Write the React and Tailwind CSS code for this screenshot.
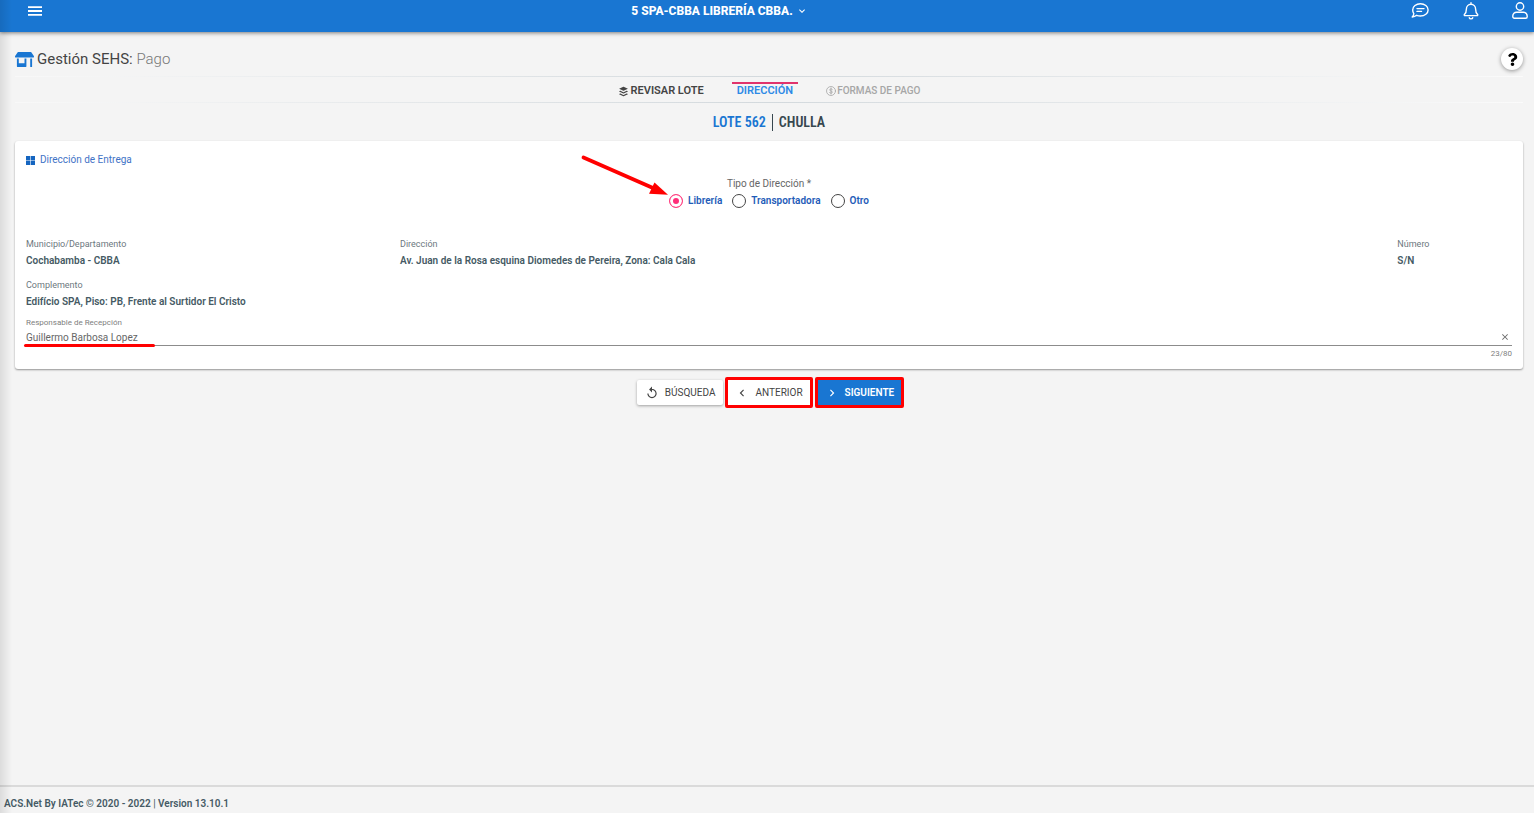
import React, { useState } from 'react';
import { FaStoreAlt, FaQuestion, FaBuffer } from 'react-icons/fa';
import { MdReplay, MdChevronLeft, MdChevronRight, MdClose, MdKeyboardArrowDown } from 'react-icons/md';

function HeaderBar() {
  return (
    <header className="relative flex h-8 items-center bg-[#1976d2] pb-[10px] text-white shadow-[0_1px_4px_rgba(0,0,0,0.5)]">
      <div className="flex flex-1 pl-7">
        <button type="button" aria-label="Menú">
          <svg className="h-[10px] w-[14px]" viewBox="0 0 14 10" fill="currentColor">
            <path d="M0 0.200h14v1.800H0zM0 4.100h14v1.800H0zM0 8h14v1.800H0z" />
          </svg>
        </button>
      </div>
      <button type="button" className="flex items-center gap-[3px] text-[12px] leading-4 font-extrabold">
        5 SPA-CBBA LIBRERÍA CBBA.
        <MdKeyboardArrowDown className="h-3 w-3" stroke="currentColor" />
      </button>
      <div className="flex flex-1 items-center justify-end gap-8 pl-[118px] pr-[5px]">
        <button type="button" aria-label="Mensajes">
          <svg className="h-[18px] w-[18px]" viewBox="0 0 18 18" fill="none" stroke="currentColor" strokeWidth="1.400" strokeLinecap="round" strokeLinejoin="round">
            <path d="M9.400 1.800c4.300 0 7.700 2.700 7.700 6.100s-3.400 6.100-7.700 6.100c-1.400 0-2.600-.3-3.700-.7-1.100.9-2.600 1.600-4.500 1.700.9-.9 1.500-2.200 1.600-3.300-.7-1.200-1.100-2.400-1.100-3.800 0-3.400 3.400-6.100 7.700-6.100z" />
            <path d="M6 6.600h7M6 9.400h4.500" />
          </svg>
        </button>
        <button type="button" aria-label="Notificaciones">
          <svg className="h-[18px] w-[18px]" viewBox="0 0 18 18" fill="none" stroke="currentColor" strokeWidth="1.400" strokeLinecap="round" strokeLinejoin="round">
            <path d="M10 .8v1.500M10 2.300c-2.700 0-4.600 2-4.600 4.600 0 3.600-1 4.600-2 5.500-.4.500-.1 1.200.5 1.200h12.200c.6 0 .9-.7.5-1.200-1-.9-2-1.900-2-5.500C14.600 4.300 12.700 2.300 10 2.300zM8.300 15.800c.3 1.400 3.100 1.400 3.400 0" />
          </svg>
        </button>
        <button type="button" aria-label="Usuario">
          <svg className="h-[18px] w-[18px]" viewBox="0 0 18 18" fill="none" stroke="currentColor" strokeWidth="1.400">
            <circle cx="9" cy="4.500" r="3.700" />
            <path d="M5.600 10.200h6.800a3.800 3.800 0 0 1 3.800 3.800v.8a1.500 1.500 0 0 1-1.500 1.500H3.300a1.500 1.500 0 0 1-1.500-1.500v-.8a3.800 3.800 0 0 1 3.800-3.800z" />
          </svg>
        </button>
      </div>
    </header>
  );
}

function Rule() {
  return <div className="h-px bg-linear-to-r from-white/40 via-[#d3d9dd] to-white/60" />;
}

function Steps() {
  return (
    <nav className="flex h-[25px] items-center justify-center gap-7 pt-[3px] text-[11px] leading-4">
      <a href="#revisar" className="flex items-center gap-[2px] font-semibold text-[#444]">
        <FaBuffer className="h-[11px] w-[11px]" />
        REVISAR LOTE
      </a>
      <a href="#direccion" aria-current="step" className="relative flex h-full items-center px-[5px] font-semibold text-[#2e8ae6]">
        <span className="absolute inset-x-0 top-[2px] h-[2px] bg-[#e0336c]" />
        DIRECCIÓN
      </a>
      <a href="#pago" className="flex items-center gap-px text-[10px] font-medium text-[#a6a6a6]">
        <svg className="h-[10px] w-[10px]" viewBox="0 0 10 10" fill="none" stroke="currentColor" strokeWidth="0.8" strokeLinecap="round">
          <circle cx="5" cy="5" r="4.500" />
          <path d="M6.400 3.700c-.3-.6-.8-.8-1.400-.8-.8 0-1.400.4-1.400 1 0 .7.600.9 1.400 1.100.8.2 1.400.5 1.400 1.100S5.800 7.200 5 7.200c-.7 0-1.200-.3-1.500-.8M5 2v6" />
        </svg>
        FORMAS DE PAGO
      </a>
    </nav>
  );
}

function Field({ label, value, className }) {
  return (
    <div className={className}>
      <dt className="text-[9px] leading-4 text-[#6d7880]">{label}</dt>
      <dd className="pt-px text-[10px] leading-4 font-semibold text-[#455a64]">{value}</dd>
    </div>
  );
}

function AddressType() {
  const [type, setType] = useState('Librería');
  return (
    <fieldset className="relative mx-auto mt-2 w-fit">
      <legend className="mx-auto text-[10px] leading-4 text-[#666]">Tipo de Dirección *</legend>
      <div className="flex gap-[10px] pt-px">
        {['Librería', 'Transportadora', 'Otro'].map((name) => (
          <label key={name} className="flex items-center gap-[5px] text-[10px] leading-4 font-semibold text-[#1f5cb8]">
            <input
              type="radio"
              name="tipo"
              checked={type === name}
              onChange={() => setType(name)}
              className="h-[14px] w-[14px] appearance-none rounded-full border border-[#444] bg-white checked:border-[#ff4081] checked:bg-[#ff2d78] checked:shadow-[inset_0_0_0_3px_#fff]"
            />
            {name}
          </label>
        ))}
      </div>
      <svg className="pointer-events-none absolute -top-[38px] -left-[90px] h-[44px] w-[90px]" viewBox="0 0 90 44">
        <path d="M4.500 3.500L74 34" stroke="#f00" strokeWidth="3.800" strokeLinecap="round" />
        <path d="M89 40.800L70 39.800L75.500 28.400z" fill="#f00" />
      </svg>
    </fieldset>
  );
}

function Receiver() {
  const [name, setName] = useState('Guillermo Barbosa Lopez');
  return (
    <div className="mt-[7px]">
      <label htmlFor="receptor" className="block text-[8px] leading-3 text-[#808080]">
        Responsable de Recepción
      </label>
      <div className="relative flex items-center border-b border-[#8c8c8c] pr-[2px]">
        <input
          id="receptor"
          maxLength={80}
          value={name}
          onChange={(e) => setName(e.target.value)}
          className="h-4 min-w-0 flex-1 bg-transparent text-[10px] text-[#666] outline-none"
        />
        <button type="button" aria-label="Borrar" onClick={() => setName('')} className="text-[#666]">
          <MdClose className="h-[10px] w-[10px]" />
        </button>
        <span className="absolute -bottom-[2px] -left-[2px] h-[3px] w-[131px] rounded-full bg-[#f00]" />
      </div>
      <div className="pt-[2px] text-right text-[8px] leading-3 text-[#808080]">{name.length}/80</div>
    </div>
  );
}

function Actions() {
  return (
    <div className="mt-[11px] flex justify-center gap-[5px] text-[10px] leading-4 text-[#444]">
      <button type="button" className="flex h-[25px] items-center gap-[6px] rounded-[2px] bg-white px-2 shadow-[0_1px_3px_rgba(0,0,0,0.35)]">
        <MdReplay className="h-[14px] w-[14px]" />
        BÚSQUEDA
      </button>
      <button type="button" className="relative flex h-[25px] items-center gap-[6px] bg-white px-[7px]">
        <MdChevronLeft className="h-[14px] w-[14px]" />
        ANTERIOR
        <span className="absolute -inset-[3px] rounded-[2px] border-3 border-[#f00]" />
      </button>
      <button type="button" className="relative ml-[3px] flex h-[25px] items-center gap-[6px] bg-[#1976d2] px-[7px] font-semibold text-white">
        <MdChevronRight className="h-[14px] w-[14px]" stroke="currentColor" />
        SIGUIENTE
        <span className="absolute -inset-[3px] rounded-[2px] border-3 border-[#f00]" />
      </button>
    </div>
  );
}

export default function App() {
  return (
    <div className="relative flex min-h-screen flex-col bg-[#f4f4f4] font-['Roboto',sans-serif]">
      <HeaderBar />
      <main className="flex-1 pr-[11px] pl-[15px]">
        <div className="flex h-11 items-center justify-between pt-[10px]">
          <h1 className="flex items-center gap-[3px] text-[15px] leading-6 text-[#444]">
            <FaStoreAlt className="h-[19px] w-[19px] text-[#1976d2]" />
            <span>
              Gestión SEHS: <span className="font-light text-[#777]">Pago</span>
            </span>
          </h1>
          <button type="button" aria-label="Ayuda" className="flex h-[22px] w-[22px] items-center justify-center rounded-full bg-white text-black shadow-[0_1px_4px_rgba(0,0,0,0.4)]">
            <FaQuestion className="h-[13px] w-[13px]" />
          </button>
        </div>
        <Rule />
        <Steps />
        <Rule />
        <h2 className="flex h-[38px] items-center justify-center gap-[6px] font-['Roboto_Condensed',Roboto,sans-serif] text-[14px] leading-4 font-semibold text-[#37474f]">
          <span className="text-[#1976d2]">LOTE 562</span>
          <span className="h-[17px] w-px bg-[#37474f]" />
          CHULLA
        </h2>
        <section className="rounded-[3px] bg-white px-[11px] pt-[11px] pb-[9px] shadow-[0_1px_2px_rgba(0,0,0,0.4)]">
          <h3 className="flex items-center gap-[5px] text-[10px] leading-4 text-[#3f73c6]">
            <svg className="h-[9px] w-[9px]" viewBox="0 0 9 9" fill="#1565c0">
              <path d="M0 0h4.200v4.200H0zM4.800 0H9v4.200H4.800zM0 4.800h4.200V9H0zM4.800 4.800H9V9H4.800z" />
            </svg>
            Dirección de Entrega
          </h3>
          <AddressType />
          <dl className="mt-[27px] grid grid-cols-12 gap-x-[10px] gap-y-2">
            <Field className="col-span-3" label="Municipio/Departamento" value="Cochabamba - CBBA" />
            <Field className="col-span-8" label="Dirección" value="Av. Juan de la Rosa esquina Diomedes de Pereira, Zona: Cala Cala" />
            <Field className="col-span-1" label="Número" value="S/N" />
            <Field className="col-span-12" label="Complemento" value="Edifício SPA, Piso: PB, Frente al Surtidor El Cristo" />
          </dl>
          <Receiver />
        </section>
        <Actions />
      </main>
      <footer className="border-t-2 border-[#dadada] px-1 pt-[9px] pb-px text-[10px] leading-4 font-semibold text-[#455a64]">
        ACS.Net By IATec © 2020 - 2022 <span className="font-normal">|</span> Version 13.10.1
      </footer>
      <div className="pointer-events-none absolute inset-y-0 left-0 w-3 bg-linear-to-r from-black/10 to-transparent" />
    </div>
  );
}
